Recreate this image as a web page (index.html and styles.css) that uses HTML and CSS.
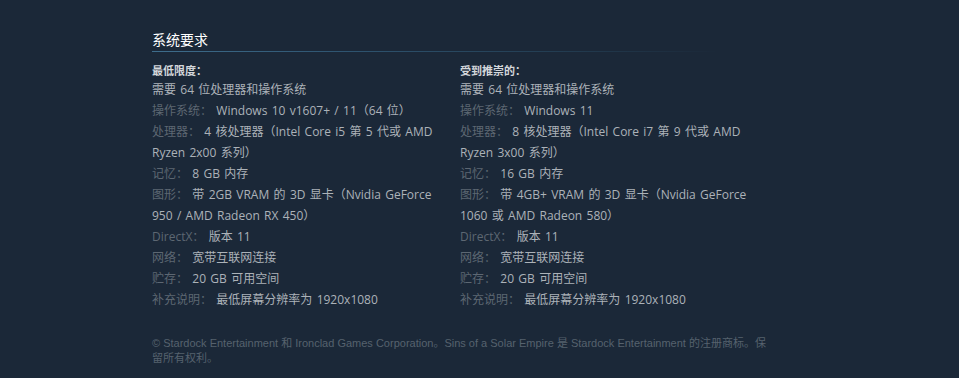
FILE: index.html
```html
<!DOCTYPE html>
<html lang="zh-CN">
<head>
<meta charset="utf-8">
<title>系统要求</title>
<link rel="stylesheet" href="styles.css">
</head>
<body>
<div class="page">
  <h2 class="title">系统要求</h2>
  <div class="sysreq">
    <div class="col">
      <ul class="req">
        <li class="head">最低限度：</li>
        <li>需要 64 位处理器和操作系统</li>
        <li><span class="k">操作系统：</span> Windows 10 v1607+ / 11（64 位）</li>
        <li><span class="k">处理器：</span> 4 核处理器（Intel Core i5 第 5 代或 AMD Ryzen 2x00 系列）</li>
        <li><span class="k">记忆：</span> 8 GB 内存</li>
        <li><span class="k">图形：</span> 带 2GB VRAM 的 3D 显卡（Nvidia GeForce 950 / AMD Radeon RX 450）</li>
        <li><span class="k">DirectX：</span> 版本 11</li>
        <li><span class="k">网络：</span> 宽带互联网连接</li>
        <li><span class="k">贮存：</span> 20 GB 可用空间</li>
        <li><span class="k">补充说明：</span> 最低屏幕分辨率为 1920x1080</li>
      </ul>
    </div>
    <div class="col">
      <ul class="req">
        <li class="head">受到推崇的：</li>
        <li>需要 64 位处理器和操作系统</li>
        <li><span class="k">操作系统：</span> Windows 11</li>
        <li><span class="k">处理器：</span> 8 核处理器（Intel Core i7 第 9 代或 AMD Ryzen 3x00 系列）</li>
        <li><span class="k">记忆：</span> 16 GB 内存</li>
        <li><span class="k">图形：</span> 带 4GB+ VRAM 的 3D 显卡（Nvidia GeForce 1060 或 AMD Radeon 580）</li>
        <li><span class="k">DirectX：</span> 版本 11</li>
        <li><span class="k">网络：</span> 宽带互联网连接</li>
        <li><span class="k">贮存：</span> 20 GB 可用空间</li>
        <li><span class="k">补充说明：</span> 最低屏幕分辨率为 1920x1080</li>
      </ul>
    </div>
  </div>
  <p class="legal">© Stardock Entertainment 和 Ironclad Games Corporation。Sins of a Solar Empire 是 Stardock Entertainment 的注册商标。保留所有权利。</p>
</div>
</body>
</html>
```
FILE: styles.css
```css
html, body {
  margin: 0;
  padding: 0;
  background: #1b2838;
}

body {
  font-family: "Open Sans", "Noto Sans CJK SC", sans-serif;
  font-size: 12px;
  color: #acb2b8;
}

.page {
  width: 616px;
  margin-left: 152px;
  padding-top: 30px;
}

.title {
  margin: 0;
  padding-bottom: 2px;
  font-size: 14px;
  line-height: 20px;
  font-weight: normal;
  color: #ffffff;
  background-image: linear-gradient(to right, #3e6d8c 0%, #2f5571 30%, #233d52 65%, rgba(27, 40, 56, 0) 92%);
  background-repeat: no-repeat;
  background-position: left bottom;
  background-size: 100% 1px;
}

.sysreq {
  display: flex;
  gap: 8px;
}

.col {
  width: 300px;
  flex: none;
}

.req {
  list-style: none;
  margin: 0;
  padding: 0;
  line-height: 21px;
  word-spacing: 1.2px;
}

.req .head {
  margin-top: 11px;
  font-size: 11px;
  line-height: 16px;
  font-weight: bold;
  color: #d3d7db;
  word-spacing: 0;
}

.k {
  color: #5d6772;
}

.legal {
  margin: 26px 0 0;
  font-family: "Liberation Sans", "Noto Sans CJK SC", sans-serif;
  font-size: 11px;
  line-height: 15px;
  color: #56626e;
}
```
